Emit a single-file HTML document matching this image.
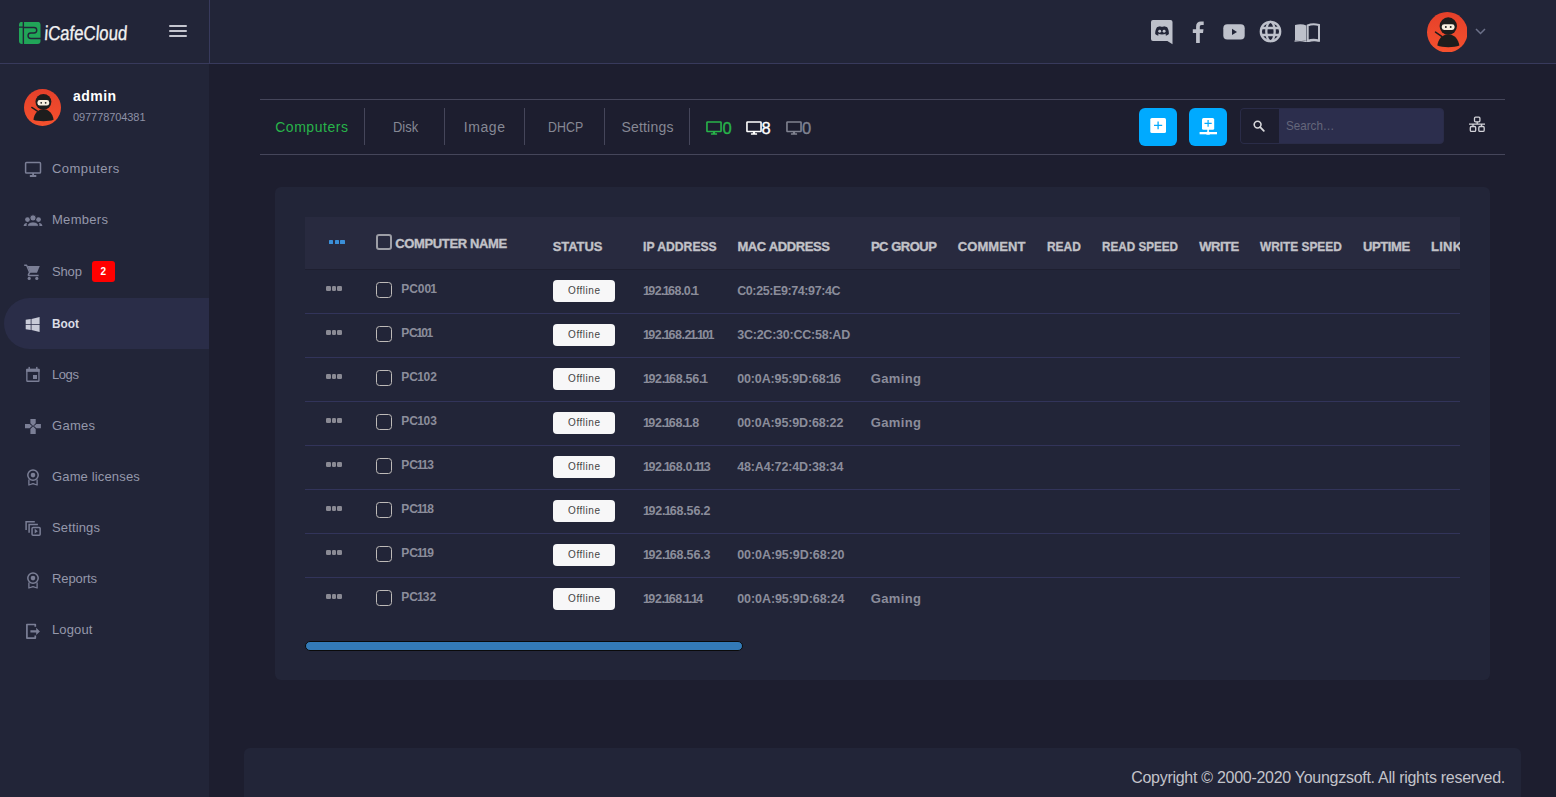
<!DOCTYPE html>
<html><head><meta charset="utf-8">
<style>
*{box-sizing:border-box;margin:0;padding:0}
html,body{width:1556px;height:797px;overflow:hidden;background:#1d1e2f;font-family:"Liberation Sans",sans-serif}
.r{position:absolute;display:block}
.tx{position:absolute;white-space:nowrap;line-height:1}
</style></head><body>
<div class="r" style="left:0px;top:0px;width:1556px;height:63px;background:#222538;"></div>
<div class="r" style="left:0px;top:63px;width:1556px;height:1px;background:#383a5c;"></div>
<div class="r" style="left:209px;top:0px;width:1px;height:63px;background:#383a5c;"></div>
<div class="r" style="left:0px;top:64px;width:209px;height:733px;background:#222538;"></div>
<svg class="r" style="left:19px;top:22px;" width="22" height="22" viewBox="19 22 22 22"><rect x="19" y="21.8" width="21.5" height="22.2" rx="3" fill="#21a558"/><path d="M23.35 21 V45 M18 27.1 H23.5 M23.5 27.5 H34 A2.75 2.75 0 0 1 34 33 H30.8 A2.75 2.75 0 0 0 30.8 38.5 H42" stroke="#222538" stroke-width="1.4" fill="none"/></svg>
<div class="tx" style="left:44px;top:23px;font-size:20px;color:#f2f2f2;transform:scaleX(0.845) skewX(-5deg);transform-origin:0 17px;letter-spacing:-0.1px;-webkit-text-stroke:0.3px #f2f2f2">iCafeCloud</div>
<div class="r" style="left:169px;top:25px;width:18px;height:2px;background:#c5c6cf;border-radius:1px;"></div>
<div class="r" style="left:169px;top:30px;width:18px;height:2px;background:#c5c6cf;border-radius:1px;"></div>
<div class="r" style="left:169px;top:35px;width:18px;height:2px;background:#c5c6cf;border-radius:1px;"></div>
<svg class="r" style="left:1151px;top:20px;" width="22" height="25" viewBox="0 0 22 25"><path d="M2 0 H19.5 A2 2 0 0 1 21.5 2 V24.2 L16.4 20.9 H2 A2 2 0 0 1 0 18.9 V2 A2 2 0 0 1 2 0Z" fill="#bec1cb"/><g transform="translate(11.05 10.9) scale(1.14 1.05) translate(-11 -10.5)"><path d="M6.5 7 C8 6 9.5 6 9.5 6 L9.8 6.6 C10.6 6.4 11.4 6.4 12.2 6.6 L12.5 6 C12.5 6 14 6 15.5 7 C17 9.5 17 12 17 13.5 C16 14.7 14.5 15 14.5 15 L13.8 14 C14.4 13.8 14.9 13.4 14.9 13.4 L14.5 13.1 C12.3 14.1 9.7 14.1 7.5 13.1 L7.1 13.4 C7.1 13.4 7.6 13.8 8.2 14 L7.5 15 C7.5 15 6 14.7 5 13.5 C5 12 5 9.5 6.5 7Z" fill="#222538"/></g><circle cx="8.7" cy="11.3" r="1.45" fill="#bec1cb"/><circle cx="13.1" cy="11.3" r="1.45" fill="#bec1cb"/></svg>
<svg class="r" style="left:1192px;top:21px;" width="12" height="22" viewBox="0 0 12 22"><path d="M7.8 22 V12 H11 L11.5 8.3 H7.8 V6 C7.8 4.9 8.2 4.1 9.7 4.1 H11.7 V0.6 C11.3 0.5 10.1 0.4 8.9 0.4 C6 0.4 4.1 2.2 4.1 5.4 V8.3 H0.8 V12 H4.1 V22Z" fill="#bec1cb"/></svg>
<svg class="r" style="left:1223px;top:24px;" width="22" height="16" viewBox="0 0 22 16"><rect x="0.3" y="0.3" width="21.4" height="15.2" rx="4" fill="#bec1cb"/><path d="M9 4.8 L14 7.9 L9 11Z" fill="#222538"/></svg>
<svg class="r" style="left:1259px;top:20px;" width="23" height="23" viewBox="0 0 23 23"><g fill="none" stroke="#bec1cb" stroke-width="2.3"><circle cx="11.5" cy="11.5" r="9.7"/><ellipse cx="11.5" cy="11.5" rx="4.2" ry="9.7"/><path d="M2 8 H21 M2 15 H21"/></g></svg>
<svg class="r" style="left:1294px;top:23px;" width="26" height="19" viewBox="0 0 26 19"><path d="M1 2 C5 1 9 1 12.3 2.5 V18 C9 16.6 5 16.6 1 17.5Z" fill="#bec1cb"/><path d="M13.7 2.5 C17 1 21 1 25 2 V17.5 C21 16.6 17 16.6 13.7 18Z" fill="none" stroke="#bec1cb" stroke-width="2"/><path d="M0.5 17.6 C5 16.8 9 16.8 13 18.6 C17 16.8 21 16.8 25.5 17.6 V18.8 C21 18 17 18 13 19.6 C9 18 5 18 0.5 18.8Z" fill="#bec1cb"/></svg>
<svg class="r" style="left:1426.75px;top:11.75px" width="40.5" height="40.5" viewBox="0 0 40 40"><defs><linearGradient id="g1" x1="0" y1="0" x2="0" y2="1"><stop offset="0" stop-color="#e5402a"/><stop offset="1" stop-color="#f5512e"/></linearGradient></defs><circle cx="20" cy="20" r="20" fill="url(#g1)"/><path d="M8.4 19.9 L14.5 24" stroke="#1d1d1d" stroke-width="1.5" stroke-linecap="round"/><path d="M10.2 33.2 C11 27 15 22 21 22 C27 22 31 27 32 33.2 C27 35.3 15 35.3 10.2 33.2Z" fill="#1d1d1d"/><circle cx="21" cy="13.9" r="8.6" fill="#1d1d1d"/><rect x="14.6" y="12" width="12.6" height="5.8" rx="2.4" fill="#f7efe0"/><circle cx="18.6" cy="14.9" r="0.95" fill="#1d1d1d"/><circle cx="23.4" cy="14.9" r="0.95" fill="#1d1d1d"/></svg>
<svg class="r" style="left:1475px;top:28px;" width="11" height="7" viewBox="0 0 11 7"><path d="M1 1 L5.5 5.5 L10 1" fill="none" stroke="#6c7189" stroke-width="1.5"/></svg>
<svg class="r" style="left:24.0px;top:89.0px" width="37" height="37" viewBox="0 0 40 40"><defs><linearGradient id="g2" x1="0" y1="0" x2="0" y2="1"><stop offset="0" stop-color="#e5402a"/><stop offset="1" stop-color="#f5512e"/></linearGradient></defs><circle cx="20" cy="20" r="20" fill="url(#g2)"/><path d="M8.4 19.9 L14.5 24" stroke="#1d1d1d" stroke-width="1.5" stroke-linecap="round"/><path d="M10.2 33.2 C11 27 15 22 21 22 C27 22 31 27 32 33.2 C27 35.3 15 35.3 10.2 33.2Z" fill="#1d1d1d"/><circle cx="21" cy="13.9" r="8.6" fill="#1d1d1d"/><rect x="14.6" y="12" width="12.6" height="5.8" rx="2.4" fill="#f7efe0"/><circle cx="18.6" cy="14.9" r="0.95" fill="#1d1d1d"/><circle cx="23.4" cy="14.9" r="0.95" fill="#1d1d1d"/></svg>
<div class="tx" style="left:73.00px;top:89.10px;font-size:14px;color:#ffffff;font-weight:bold;letter-spacing:0.450px;">admin</div>
<div class="tx" style="left:73.00px;top:111.65px;font-size:11px;color:#8e91a6;letter-spacing:-0.082px;">097778704381</div>
<div class="r" style="left:4px;top:298px;width:205px;height:51px;background:#2a2d48;border-radius:26px 0 0 26px;"></div>
<div class="tx" style="left:52.00px;top:161.95px;font-size:13px;color:#9598ab;letter-spacing:0.450px;">Computers</div>
<div class="tx" style="left:52.00px;top:212.95px;font-size:13px;color:#9598ab;letter-spacing:0.283px;">Members</div>
<div class="tx" style="left:52.00px;top:264.95px;font-size:13px;color:#9598ab;letter-spacing:-0.167px;">Shop</div>
<div class="tx" style="left:52.00px;top:316.95px;font-size:13px;color:#dcdde6;font-weight:bold;transform:scaleX(0.9088);transform-origin:0 0;">Boot</div>
<div class="tx" style="left:52.00px;top:367.95px;font-size:13px;color:#9598ab;letter-spacing:-0.433px;">Logs</div>
<div class="tx" style="left:52.00px;top:418.95px;font-size:13px;color:#9598ab;letter-spacing:0.300px;">Games</div>
<div class="tx" style="left:52.00px;top:469.95px;font-size:13px;color:#9598ab;letter-spacing:0.150px;">Game licenses</div>
<div class="tx" style="left:52.00px;top:520.95px;font-size:13px;color:#9598ab;letter-spacing:0.143px;">Settings</div>
<div class="tx" style="left:52.00px;top:572.45px;font-size:13px;color:#9598ab;letter-spacing:-0.083px;">Reports</div>
<div class="tx" style="left:52.00px;top:623.45px;font-size:13px;color:#9598ab;letter-spacing:0.140px;">Logout</div>
<svg class="r" style="left:22px;top:159px;" width="22" height="20" viewBox="22 159 22 20"><rect x="25.6" y="162.6" width="14.9" height="10.5" rx="0.9" fill="none" stroke="#7b7f96" stroke-width="1.5"/><rect x="32.2" y="173" width="1.8" height="2.2" fill="#7b7f96"/><rect x="29.8" y="174.9" width="6.5" height="2" rx="0.5" fill="#7b7f96"/></svg>
<svg class="r" style="left:22px;top:213px;" width="22" height="15" viewBox="22 213 22 15"><circle cx="27.5" cy="219.6" r="2.4" fill="#7b7f96"/><circle cx="38.5" cy="219.6" r="2.4" fill="#7b7f96"/><path d="M23.6 226.1 C23.8 224.2 25 223.1 27 223 C26.6 224 26.5 225 26.6 226.1Z" fill="#7b7f96"/><path d="M42.4 226.1 C42.2 224.2 41 223.1 39 223 C39.4 224 39.5 225 39.4 226.1Z" fill="#7b7f96"/><circle cx="33" cy="217.9" r="3.1" fill="#7b7f96" stroke="#222538" stroke-width="0.9"/><path d="M27.4 226.3 C27.4 223.4 29.8 221.9 33 221.9 C36.2 221.9 38.6 223.4 38.6 226.3Z" fill="#7b7f96" stroke="#222538" stroke-width="0.9"/></svg>
<svg class="r" style="left:22px;top:262px;" width="22" height="20" viewBox="22 262 22 20"><path d="M24.2 265.3 H26.6 L30 273.3" fill="none" stroke="#7b7f96" stroke-width="1.4" stroke-linejoin="round"/><path d="M27.6 266 H39.8 L37 272.8 H30.2Z" fill="#7b7f96"/><path d="M29.6 272.2 L28.4 274.6 C28.2 275.2 28.5 275.5 29 275.5 H38.6" fill="none" stroke="#7b7f96" stroke-width="1.4"/><circle cx="29.2" cy="278.4" r="1.6" fill="#7b7f96"/><circle cx="36.8" cy="278.4" r="1.6" fill="#7b7f96"/></svg>
<svg class="r" style="left:24px;top:315px;" width="18" height="19" viewBox="24 315 18 19"><path d="M25.7 319.8 L30.7 319 V324 H25.7Z M31.5 318.9 L39.6 317 V324 H31.5Z M25.7 324.8 H30.7 V329.9 L25.7 329.2Z M31.5 324.8 H39.6 V331.9 L31.5 330.1Z" fill="#c9cbd8"/></svg>
<svg class="r" style="left:24px;top:365px;" width="18" height="19" viewBox="24 365 18 19"><rect x="26.85" y="369.5" width="12.1" height="11.75" rx="0.6" fill="none" stroke="#7b7f96" stroke-width="1.3"/><rect x="26.2" y="368.85" width="13.4" height="3" fill="#7b7f96"/><rect x="28.5" y="366.9" width="1.4" height="2.2" fill="#7b7f96"/><rect x="36.1" y="366.9" width="1.4" height="2.2" fill="#7b7f96"/><rect x="33" y="375" width="4" height="4" fill="#7b7f96"/></svg>
<svg class="r" style="left:23px;top:417px;" width="20" height="19" viewBox="23 417 20 19"><path d="M30.4 418.9 H35.7 V423.3 L33.05 426 L30.4 423.3Z M30.4 433.9 H35.7 V429 L33.05 426.3 L30.4 429Z M25 423.9 H29.6 L32.1 426.1 L29.6 428.3 H25Z M40.9 423.9 H36.4 L33.9 426.1 L36.4 428.3 H40.9Z" fill="#7b7f96"/></svg>
<svg class="r" style="left:25px;top:467px;" width="17" height="20" viewBox="25 467 17 20"><circle cx="33" cy="475.1" r="5.2" fill="none" stroke="#7b7f96" stroke-width="1.5"/><circle cx="33" cy="475.1" r="2.3" fill="#7b7f96"/><path d="M28.9 479.5 V485 L33 483.6 L37.1 485 V479.5" fill="none" stroke="#7b7f96" stroke-width="1.3" stroke-linejoin="round"/></svg>
<svg class="r" style="left:25px;top:569.5px;" width="17" height="20" viewBox="25 569.5 17 20"><circle cx="33" cy="577.6" r="5.2" fill="none" stroke="#7b7f96" stroke-width="1.5"/><circle cx="33" cy="577.6" r="2.3" fill="#7b7f96"/><path d="M28.9 582.0 V587.5 L33 586.1 L37.1 587.5 V582.0" fill="none" stroke="#7b7f96" stroke-width="1.3" stroke-linejoin="round"/></svg>
<svg class="r" style="left:23px;top:518px;" width="20" height="20" viewBox="23 518 20 20"><path d="M26.1 530 V521.7 H34.8 M29.1 532.8 V524.6 H37.9" fill="none" stroke="#7b7f96" stroke-width="1.5"/><rect x="32.05" y="527.45" width="8.1" height="7.7" rx="1" fill="none" stroke="#7b7f96" stroke-width="1.5"/><path d="M34.7 528.8 L37.8 531.2 L34.7 533.6Z" fill="#7b7f96"/></svg>
<svg class="r" style="left:24px;top:621px;" width="18" height="20" viewBox="24 621 18 20"><path d="M35.3 626.8 V624.5 H26.9 V638.1 H35.3 V635.6" fill="none" stroke="#7b7f96" stroke-width="1.7" stroke-linejoin="round"/><path d="M30.4 630.2 H36.2 V627.8 L39.9 631.4 L36.2 634.9 V632.6 H30.4Z" fill="#7b7f96"/></svg>
<div class="r" style="left:92px;top:261px;width:23px;height:21px;background:#ff0000;border-radius:3px;"></div>
<div class="tx" style="left:100.50px;top:267.00px;font-size:10px;color:#ffffff;font-weight:bold;">2</div>
<div class="r" style="left:260px;top:99px;width:1245px;height:1px;background:#45465a;"></div>
<div class="r" style="left:260px;top:154px;width:1245px;height:1px;background:#45465a;"></div>
<div class="r" style="left:364px;top:108px;width:1px;height:37px;background:#45465a;"></div>
<div class="r" style="left:444px;top:108px;width:1px;height:37px;background:#45465a;"></div>
<div class="r" style="left:524px;top:108px;width:1px;height:37px;background:#45465a;"></div>
<div class="r" style="left:604px;top:108px;width:1px;height:37px;background:#45465a;"></div>
<div class="r" style="left:689px;top:108px;width:1px;height:37px;background:#45465a;"></div>
<div class="tx" style="left:275.20px;top:119.50px;font-size:14px;color:#28b44a;letter-spacing:0.537px;">Computers</div>
<div class="tx" style="left:392.70px;top:119.50px;font-size:14px;color:#868894;transform:scaleX(0.9231);transform-origin:0 0;">Disk</div>
<div class="tx" style="left:463.70px;top:119.50px;font-size:14px;color:#868894;letter-spacing:0.600px;">Image</div>
<div class="tx" style="left:547.60px;top:119.50px;font-size:14px;color:#868894;transform:scaleX(0.8866);transform-origin:0 0;">DHCP</div>
<div class="tx" style="left:621.40px;top:119.50px;font-size:14px;color:#868894;letter-spacing:0.200px;">Settings</div>
<svg class="r" style="left:705.5px;top:121px;" width="16" height="15" viewBox="0 0 16 15"><rect x="0.95" y="0.95" width="14.1" height="9.6" rx="0.6" fill="none" stroke="#28b44a" stroke-width="1.6"/><rect x="6.9" y="10.5" width="2.2" height="2.5" fill="#28b44a"/><rect x="4.9" y="12.2" width="6.2" height="1.6" rx="0.4" fill="#28b44a"/></svg>
<div class="tx" style="left:722.60px;top:120.07px;font-size:16.5px;color:#28b44a;-webkit-text-stroke:0.35px #28b44a;">0</div>
<svg class="r" style="left:745.5px;top:121px;" width="16" height="15" viewBox="0 0 16 15"><rect x="0.95" y="0.95" width="14.1" height="9.6" rx="0.6" fill="none" stroke="#ffffff" stroke-width="1.6"/><rect x="6.9" y="10.5" width="2.2" height="2.5" fill="#ffffff"/><rect x="4.9" y="12.2" width="6.2" height="1.6" rx="0.4" fill="#ffffff"/></svg>
<div class="tx" style="left:761.50px;top:120.07px;font-size:16.5px;color:#ffffff;-webkit-text-stroke:0.35px #ffffff;">8</div>
<svg class="r" style="left:785.5px;top:121px;" width="16" height="15" viewBox="0 0 16 15"><rect x="0.95" y="0.95" width="14.1" height="9.6" rx="0.6" fill="none" stroke="#808290" stroke-width="1.6"/><rect x="6.9" y="10.5" width="2.2" height="2.5" fill="#808290"/><rect x="4.9" y="12.2" width="6.2" height="1.6" rx="0.4" fill="#808290"/></svg>
<div class="tx" style="left:802.00px;top:120.07px;font-size:16.5px;color:#808290;-webkit-text-stroke:0.35px #808290;">0</div>
<div class="r" style="left:1139px;top:108px;width:38px;height:38px;background:#00aaff;border-radius:6px;"></div>
<svg class="r" style="left:1150px;top:118px;" width="16" height="15" viewBox="0 0 16 15"><rect x="0.3" y="0" width="15.7" height="15" rx="1.6" fill="#fff"/><path d="M4 7.4 H12.2 M8.1 3.6 V11.3" stroke="#00aaff" stroke-width="1.3"/></svg>
<div class="r" style="left:1189px;top:108px;width:38px;height:38px;background:#00aaff;border-radius:6px;"></div>
<svg class="r" style="left:1199px;top:117px;" width="19" height="18" viewBox="0 0 19 18"><rect x="3" y="1" width="12.2" height="11.7" rx="1.5" fill="#fff"/><path d="M5.5 6.3 H12.7 M9.1 3 V9.8" stroke="#00aaff" stroke-width="1.2"/><rect x="8.3" y="12" width="1.6" height="3" fill="#fff"/><rect x="0.6" y="15" width="17.4" height="2.3" fill="#fff"/><ellipse cx="9.1" cy="16.2" rx="2.3" ry="1.6" fill="#fff"/></svg>
<div class="r" style="left:1239.5px;top:108px;width:204.5px;height:36px;background:#2c2e4d;border:1px solid #2a2c48;border-radius:4px;"></div>
<div class="r" style="left:1240.5px;top:109px;width:38px;height:34px;background:#1d1e2f;border-radius:3px 0 0 3px;"></div>
<svg class="r" style="left:1253px;top:120px;" width="12" height="12" viewBox="0 0 12 12"><circle cx="4.6" cy="4.6" r="3.4" fill="none" stroke="#d8d8dc" stroke-width="1.6"/><path d="M7.2 7.2 L10.8 10.8" stroke="#d8d8dc" stroke-width="1.8" stroke-linecap="round"/></svg>
<div class="tx" style="left:1285.50px;top:119.35px;font-size:13px;color:#65677b;transform:scaleX(0.8948);transform-origin:0 0;">Search…</div>
<svg class="r" style="left:1467px;top:114px;" width="20" height="20" viewBox="1467 114 20 20"><g fill="none" stroke="#d2d2d8" stroke-width="1.3"><rect x="1474.5" y="117.2" width="5.4" height="4.6" rx="1"/><rect x="1470.3" y="126.5" width="5.4" height="4.9" rx="1.2"/><rect x="1478.8" y="126.5" width="5.4" height="4.9" rx="1.2"/><path d="M1477.2 121.8 V124.2 M1469 124.2 H1485 M1473 124.2 V126.5 M1481.5 124.2 V126.5"/></g></svg>
<div class="r" style="left:275px;top:187px;width:1215px;height:493px;background:#222538;border-radius:6px;"></div>
<div class="r" style="left:305px;top:217px;width:1155px;height:52px;background:#282a3f;"></div>
<div class="r" style="left:305px;top:269px;width:1155px;height:1px;background:#1e1f30;"></div>
<div class="r" style="left:329.0px;top:240px;width:4.2px;height:4.2px;background:#3b8fd8;border-radius:0.6px;"></div>
<div class="r" style="left:334.7px;top:240px;width:4.2px;height:4.2px;background:#3b8fd8;border-radius:0.6px;"></div>
<div class="r" style="left:340.4px;top:240px;width:4.2px;height:4.2px;background:#3b8fd8;border-radius:0.6px;"></div>
<div class="r" style="left:376px;top:234px;width:16px;height:16px;background:transparent;border:2px solid #9d9ea6;border-radius:3px;"></div>
<div class="tx" style="left:395.30px;top:237.45px;font-size:13px;color:#c2c2c8;font-weight:bold;letter-spacing:-0.367px;-webkit-text-stroke:0.35px #c2c2c8;">COMPUTER NAME</div>
<div class="r" style="left:0;top:0;width:1460px;height:797px;overflow:hidden">
<div class="tx" style="left:552.70px;top:240.05px;font-size:13px;color:#c2c2c8;font-weight:bold;letter-spacing:-0.080px;-webkit-text-stroke:0.35px #c2c2c8;">STATUS</div>
<div class="tx" style="left:642.90px;top:240.05px;font-size:13px;color:#c2c2c8;font-weight:bold;transform:scaleX(0.9365);transform-origin:0 0;-webkit-text-stroke:0.35px #c2c2c8;">IP ADDRESS</div>
<div class="tx" style="left:737.40px;top:240.05px;font-size:13px;color:#c2c2c8;font-weight:bold;letter-spacing:-0.370px;-webkit-text-stroke:0.35px #c2c2c8;">MAC ADDRESS</div>
<div class="tx" style="left:870.90px;top:240.05px;font-size:13px;color:#c2c2c8;font-weight:bold;letter-spacing:-0.471px;-webkit-text-stroke:0.35px #c2c2c8;">PC GROUP</div>
<div class="tx" style="left:957.80px;top:240.05px;font-size:13px;color:#c2c2c8;font-weight:bold;letter-spacing:0.067px;-webkit-text-stroke:0.35px #c2c2c8;">COMMENT</div>
<div class="tx" style="left:1047.20px;top:240.05px;font-size:13px;color:#c2c2c8;font-weight:bold;transform:scaleX(0.9185);transform-origin:0 0;-webkit-text-stroke:0.35px #c2c2c8;">READ</div>
<div class="tx" style="left:1101.90px;top:240.05px;font-size:13px;color:#c2c2c8;font-weight:bold;transform:scaleX(0.8994);transform-origin:0 0;-webkit-text-stroke:0.35px #c2c2c8;">READ SPEED</div>
<div class="tx" style="left:1199.20px;top:240.05px;font-size:13px;color:#c2c2c8;font-weight:bold;letter-spacing:-0.450px;-webkit-text-stroke:0.35px #c2c2c8;">WRITE</div>
<div class="tx" style="left:1260.20px;top:240.05px;font-size:13px;color:#c2c2c8;font-weight:bold;transform:scaleX(0.9129);transform-origin:0 0;-webkit-text-stroke:0.35px #c2c2c8;">WRITE SPEED</div>
<div class="tx" style="left:1363.00px;top:240.05px;font-size:13px;color:#c2c2c8;font-weight:bold;letter-spacing:-0.380px;-webkit-text-stroke:0.35px #c2c2c8;">UPTIME</div>
<div class="tx" style="left:1431.00px;top:240.05px;font-size:13px;color:#c2c2c8;font-weight:bold;letter-spacing:0.233px;-webkit-text-stroke:0.35px #c2c2c8;">LINK</div>
</div>
<div class="r" style="left:305px;top:313px;width:1155px;height:1px;background:#32345a;"></div>
<div class="r" style="left:326.3px;top:286.2px;width:4.6px;height:4.8px;background:#8a8a94;border-radius:1.2px;"></div>
<div class="r" style="left:331.8px;top:286.2px;width:4.6px;height:4.8px;background:#8a8a94;border-radius:1.2px;"></div>
<div class="r" style="left:337.3px;top:286.2px;width:4.6px;height:4.8px;background:#8a8a94;border-radius:1.2px;"></div>
<div class="r" style="left:376px;top:282px;width:16px;height:16px;background:transparent;border:1.6px solid #bebbb8;border-radius:3.5px;"></div>
<div class="tx" style="left:401.20px;top:282.80px;font-size:12px;color:#8b8d9b;font-weight:bold;">PC00<span style="margin:0 -1.10px">1</span></div>
<div class="r" style="left:553px;top:280px;width:62px;height:22px;background:#f7f7f8;border-radius:4px;"></div>
<div class="tx" style="left:568.10px;top:285.50px;font-size:10px;color:#444444;letter-spacing:0.533px;">Offline</div>
<div class="tx" style="left:644.25px;top:285.38px;font-size:12.5px;color:#8b8d9b;font-weight:bold;letter-spacing:-0.510px;"><span style="margin:0 -1.25px">1</span>92.<span style="margin:0 -1.25px">1</span>68.0.<span style="margin:0 -1.25px">1</span></div>
<div class="tx" style="left:737.20px;top:285.38px;font-size:12.5px;color:#8b8d9b;font-weight:bold;letter-spacing:-0.400px;">C0:25:E9:74:97:4C</div>
<div class="r" style="left:305px;top:357px;width:1155px;height:1px;background:#32345a;"></div>
<div class="r" style="left:326.3px;top:330.2px;width:4.6px;height:4.8px;background:#8a8a94;border-radius:1.2px;"></div>
<div class="r" style="left:331.8px;top:330.2px;width:4.6px;height:4.8px;background:#8a8a94;border-radius:1.2px;"></div>
<div class="r" style="left:337.3px;top:330.2px;width:4.6px;height:4.8px;background:#8a8a94;border-radius:1.2px;"></div>
<div class="r" style="left:376px;top:326px;width:16px;height:16px;background:transparent;border:1.6px solid #bebbb8;border-radius:3.5px;"></div>
<div class="tx" style="left:401.20px;top:326.80px;font-size:12px;color:#8b8d9b;font-weight:bold;letter-spacing:-0.238px;">PC<span style="margin:0 -1.25px">1</span>0<span style="margin:0 -1.25px">1</span></div>
<div class="r" style="left:553px;top:324px;width:62px;height:22px;background:#f7f7f8;border-radius:4px;"></div>
<div class="tx" style="left:568.10px;top:329.50px;font-size:10px;color:#444444;letter-spacing:0.533px;">Offline</div>
<div class="tx" style="left:644.25px;top:329.38px;font-size:12.5px;color:#8b8d9b;font-weight:bold;letter-spacing:-0.423px;"><span style="margin:0 -1.25px">1</span>92.<span style="margin:0 -1.25px">1</span>68.2<span style="margin:0 -1.25px">1</span>.<span style="margin:0 -1.25px">1</span>0<span style="margin:0 -1.25px">1</span></div>
<div class="tx" style="left:737.20px;top:329.38px;font-size:12.5px;color:#8b8d9b;font-weight:bold;letter-spacing:-0.231px;">3C:2C:30:CC:58:AD</div>
<div class="r" style="left:305px;top:401px;width:1155px;height:1px;background:#32345a;"></div>
<div class="r" style="left:326.3px;top:374.2px;width:4.6px;height:4.8px;background:#8a8a94;border-radius:1.2px;"></div>
<div class="r" style="left:331.8px;top:374.2px;width:4.6px;height:4.8px;background:#8a8a94;border-radius:1.2px;"></div>
<div class="r" style="left:337.3px;top:374.2px;width:4.6px;height:4.8px;background:#8a8a94;border-radius:1.2px;"></div>
<div class="r" style="left:376px;top:370px;width:16px;height:16px;background:transparent;border:1.6px solid #bebbb8;border-radius:3.5px;"></div>
<div class="tx" style="left:401.20px;top:370.80px;font-size:12px;color:#8b8d9b;font-weight:bold;">PC<span style="margin:0 -0.55px">1</span>02</div>
<div class="r" style="left:553px;top:368px;width:62px;height:22px;background:#f7f7f8;border-radius:4px;"></div>
<div class="tx" style="left:568.10px;top:373.50px;font-size:10px;color:#444444;letter-spacing:0.533px;">Offline</div>
<div class="tx" style="left:644.25px;top:373.38px;font-size:12.5px;color:#8b8d9b;font-weight:bold;letter-spacing:-0.291px;"><span style="margin:0 -1.25px">1</span>92.<span style="margin:0 -1.25px">1</span>68.56.<span style="margin:0 -1.25px">1</span></div>
<div class="tx" style="left:737.20px;top:373.38px;font-size:12.5px;color:#8b8d9b;font-weight:bold;letter-spacing:-0.138px;">00:0A:95:9D:68:<span style="margin:0 -1.25px">1</span>6</div>
<div class="tx" style="left:870.70px;top:371.95px;font-size:13px;color:#8b8d9b;font-weight:bold;letter-spacing:0.380px;">Gaming</div>
<div class="r" style="left:305px;top:445px;width:1155px;height:1px;background:#32345a;"></div>
<div class="r" style="left:326.3px;top:418.2px;width:4.6px;height:4.8px;background:#8a8a94;border-radius:1.2px;"></div>
<div class="r" style="left:331.8px;top:418.2px;width:4.6px;height:4.8px;background:#8a8a94;border-radius:1.2px;"></div>
<div class="r" style="left:337.3px;top:418.2px;width:4.6px;height:4.8px;background:#8a8a94;border-radius:1.2px;"></div>
<div class="r" style="left:376px;top:414px;width:16px;height:16px;background:transparent;border:1.6px solid #bebbb8;border-radius:3.5px;"></div>
<div class="tx" style="left:401.20px;top:414.80px;font-size:12px;color:#8b8d9b;font-weight:bold;">PC<span style="margin:0 -0.55px">1</span>03</div>
<div class="r" style="left:553px;top:412px;width:62px;height:22px;background:#f7f7f8;border-radius:4px;"></div>
<div class="tx" style="left:568.10px;top:417.50px;font-size:10px;color:#444444;letter-spacing:0.533px;">Offline</div>
<div class="tx" style="left:644.25px;top:417.38px;font-size:12.5px;color:#8b8d9b;font-weight:bold;letter-spacing:-0.355px;"><span style="margin:0 -1.25px">1</span>92.<span style="margin:0 -1.25px">1</span>68.<span style="margin:0 -1.25px">1</span>.8</div>
<div class="tx" style="left:737.20px;top:417.38px;font-size:12.5px;color:#8b8d9b;font-weight:bold;letter-spacing:-0.138px;">00:0A:95:9D:68:22</div>
<div class="tx" style="left:870.70px;top:415.95px;font-size:13px;color:#8b8d9b;font-weight:bold;letter-spacing:0.380px;">Gaming</div>
<div class="r" style="left:305px;top:489px;width:1155px;height:1px;background:#32345a;"></div>
<div class="r" style="left:326.3px;top:462.2px;width:4.6px;height:4.8px;background:#8a8a94;border-radius:1.2px;"></div>
<div class="r" style="left:331.8px;top:462.2px;width:4.6px;height:4.8px;background:#8a8a94;border-radius:1.2px;"></div>
<div class="r" style="left:337.3px;top:462.2px;width:4.6px;height:4.8px;background:#8a8a94;border-radius:1.2px;"></div>
<div class="r" style="left:376px;top:458px;width:16px;height:16px;background:transparent;border:1.6px solid #bebbb8;border-radius:3.5px;"></div>
<div class="tx" style="left:401.20px;top:458.80px;font-size:12px;color:#8b8d9b;font-weight:bold;">PC<span style="margin:0 -1.03px">1</span><span style="margin:0 -1.03px">1</span>3</div>
<div class="r" style="left:553px;top:456px;width:62px;height:22px;background:#f7f7f8;border-radius:4px;"></div>
<div class="tx" style="left:568.10px;top:461.50px;font-size:10px;color:#444444;letter-spacing:0.533px;">Offline</div>
<div class="tx" style="left:644.25px;top:461.38px;font-size:12.5px;color:#8b8d9b;font-weight:bold;letter-spacing:-0.288px;"><span style="margin:0 -1.25px">1</span>92.<span style="margin:0 -1.25px">1</span>68.0.<span style="margin:0 -1.25px">1</span><span style="margin:0 -1.25px">1</span>3</div>
<div class="tx" style="left:737.20px;top:461.38px;font-size:12.5px;color:#8b8d9b;font-weight:bold;letter-spacing:-0.138px;">48:A4:72:4D:38:34</div>
<div class="r" style="left:305px;top:533px;width:1155px;height:1px;background:#32345a;"></div>
<div class="r" style="left:326.3px;top:506.2px;width:4.6px;height:4.8px;background:#8a8a94;border-radius:1.2px;"></div>
<div class="r" style="left:331.8px;top:506.2px;width:4.6px;height:4.8px;background:#8a8a94;border-radius:1.2px;"></div>
<div class="r" style="left:337.3px;top:506.2px;width:4.6px;height:4.8px;background:#8a8a94;border-radius:1.2px;"></div>
<div class="r" style="left:376px;top:502px;width:16px;height:16px;background:transparent;border:1.6px solid #bebbb8;border-radius:3.5px;"></div>
<div class="tx" style="left:401.20px;top:502.80px;font-size:12px;color:#8b8d9b;font-weight:bold;">PC<span style="margin:0 -1.03px">1</span><span style="margin:0 -1.03px">1</span>8</div>
<div class="r" style="left:553px;top:500px;width:62px;height:22px;background:#f7f7f8;border-radius:4px;"></div>
<div class="tx" style="left:568.10px;top:505.50px;font-size:10px;color:#444444;letter-spacing:0.533px;">Offline</div>
<div class="tx" style="left:644.25px;top:505.38px;font-size:12.5px;color:#8b8d9b;font-weight:bold;letter-spacing:-0.168px;"><span style="margin:0 -1.25px">1</span>92.<span style="margin:0 -1.25px">1</span>68.56.2</div>
<div class="r" style="left:305px;top:577px;width:1155px;height:1px;background:#32345a;"></div>
<div class="r" style="left:326.3px;top:550.2px;width:4.6px;height:4.8px;background:#8a8a94;border-radius:1.2px;"></div>
<div class="r" style="left:331.8px;top:550.2px;width:4.6px;height:4.8px;background:#8a8a94;border-radius:1.2px;"></div>
<div class="r" style="left:337.3px;top:550.2px;width:4.6px;height:4.8px;background:#8a8a94;border-radius:1.2px;"></div>
<div class="r" style="left:376px;top:546px;width:16px;height:16px;background:transparent;border:1.6px solid #bebbb8;border-radius:3.5px;"></div>
<div class="tx" style="left:401.20px;top:546.80px;font-size:12px;color:#8b8d9b;font-weight:bold;">PC<span style="margin:0 -1.03px">1</span><span style="margin:0 -1.03px">1</span>9</div>
<div class="r" style="left:553px;top:544px;width:62px;height:22px;background:#f7f7f8;border-radius:4px;"></div>
<div class="tx" style="left:568.10px;top:549.50px;font-size:10px;color:#444444;letter-spacing:0.533px;">Offline</div>
<div class="tx" style="left:644.25px;top:549.38px;font-size:12.5px;color:#8b8d9b;font-weight:bold;letter-spacing:-0.168px;"><span style="margin:0 -1.25px">1</span>92.<span style="margin:0 -1.25px">1</span>68.56.3</div>
<div class="tx" style="left:737.20px;top:549.38px;font-size:12.5px;color:#8b8d9b;font-weight:bold;letter-spacing:-0.069px;">00:0A:95:9D:68:20</div>
<div class="r" style="left:326.3px;top:594.2px;width:4.6px;height:4.8px;background:#8a8a94;border-radius:1.2px;"></div>
<div class="r" style="left:331.8px;top:594.2px;width:4.6px;height:4.8px;background:#8a8a94;border-radius:1.2px;"></div>
<div class="r" style="left:337.3px;top:594.2px;width:4.6px;height:4.8px;background:#8a8a94;border-radius:1.2px;"></div>
<div class="r" style="left:376px;top:590px;width:16px;height:16px;background:transparent;border:1.6px solid #bebbb8;border-radius:3.5px;"></div>
<div class="tx" style="left:401.20px;top:590.80px;font-size:12px;color:#8b8d9b;font-weight:bold;">PC<span style="margin:0 -0.90px">1</span>32</div>
<div class="r" style="left:553px;top:588px;width:62px;height:22px;background:#f7f7f8;border-radius:4px;"></div>
<div class="tx" style="left:568.10px;top:593.50px;font-size:10px;color:#444444;letter-spacing:0.533px;">Offline</div>
<div class="tx" style="left:644.25px;top:593.38px;font-size:12.5px;color:#8b8d9b;font-weight:bold;letter-spacing:-0.368px;"><span style="margin:0 -1.25px">1</span>92.<span style="margin:0 -1.25px">1</span>68.<span style="margin:0 -1.25px">1</span>.<span style="margin:0 -1.25px">1</span>4</div>
<div class="tx" style="left:737.20px;top:593.38px;font-size:12.5px;color:#8b8d9b;font-weight:bold;letter-spacing:-0.069px;">00:0A:95:9D:68:24</div>
<div class="tx" style="left:870.70px;top:591.95px;font-size:13px;color:#8b8d9b;font-weight:bold;letter-spacing:0.380px;">Gaming</div>
<div class="r" style="left:305px;top:641px;width:438px;height:10px;background:#337ab7;border:1px solid #0a0a0a;border-radius:5px;"></div>
<div class="r" style="left:244px;top:748px;width:1277px;height:60px;background:#222538;border-radius:6px;"></div>
<div class="tx" style="left:1131.20px;top:770.20px;font-size:16px;color:#c3c3ca;letter-spacing:-0.281px;">Copyright © 2000-2020 Youngzsoft. All rights reserved.</div>
</body></html>
